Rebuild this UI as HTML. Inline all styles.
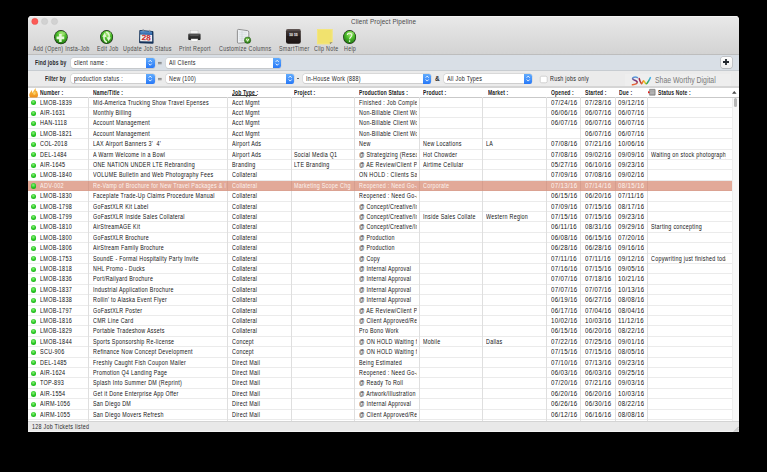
<!DOCTYPE html>
<html><head><meta charset="utf-8"><style>
*{box-sizing:border-box}
html,body{margin:0;padding:0;background:#000;width:767px;height:472px;overflow:hidden}
body{font-family:"Liberation Sans",sans-serif;color:#111}
#win{position:absolute;left:28px;top:16px;width:711px;height:416px;background:#fff;border-radius:4px 4px 0 0;overflow:hidden}
.abs{position:absolute}
svg{position:absolute;overflow:visible}
.t{position:absolute;white-space:nowrap;line-height:10px;height:10px;transform-origin:0 0}
</style></head><body><div id="win">

<div class="abs" style="left:0;top:0;width:711px;height:38.6px;background:linear-gradient(#e9e9e9,#d3d3d3);border-bottom:1px solid #bdbdbd"></div>
<div class="abs" style="left:0;top:0;width:711px;height:1px;background:#f4f4f4"></div>
<svg style="left:2.00px;top:1.00px" width="30" height="9" viewBox="0 0 30 9">
<circle cx="4.85" cy="4.4" r="3.15" fill="#fc5b57" stroke="#e5463f" stroke-width=".35"/>
<circle cx="14.6" cy="4.4" r="3.15" fill="#d2d2d2" stroke="#c3c3c3" stroke-width=".35"/>
<circle cx="24.5" cy="4.4" r="3.15" fill="#d2d2d2" stroke="#c3c3c3" stroke-width=".35"/>
</svg>
<div class="t" style="left:323.00px;top:0.54px;font-size:6.8px;color:#4a4a4a;letter-spacing:0.15px;transform:scaleX(0.93);">Client Project Pipeline</div>
<div class="t" style="left:4.60px;top:28.02px;font-size:6.3px;color:#4a4a4a;letter-spacing:0.32px;transform:scaleX(0.85);">Add (Open) Insta-Job</div>
<div class="t" style="left:68.80px;top:28.02px;font-size:6.3px;color:#4a4a4a;letter-spacing:0.32px;transform:scaleX(0.85);">Edit Job</div>
<div class="t" style="left:94.60px;top:28.02px;font-size:6.3px;color:#4a4a4a;letter-spacing:0.32px;transform:scaleX(0.85);">Update Job Status</div>
<div class="t" style="left:151.00px;top:28.02px;font-size:6.3px;color:#4a4a4a;letter-spacing:0.32px;transform:scaleX(0.85);">Print Report</div>
<div class="t" style="left:190.80px;top:28.02px;font-size:6.3px;color:#4a4a4a;letter-spacing:0.32px;transform:scaleX(0.85);">Customize Columns</div>
<div class="t" style="left:250.50px;top:28.02px;font-size:6.3px;color:#4a4a4a;letter-spacing:0.32px;transform:scaleX(0.85);">SmartTimer</div>
<div class="t" style="left:285.70px;top:28.02px;font-size:6.3px;color:#4a4a4a;letter-spacing:0.32px;transform:scaleX(0.85);">Clip Note</div>
<div class="t" style="left:316.00px;top:28.02px;font-size:6.3px;color:#4a4a4a;letter-spacing:0.32px;transform:scaleX(0.85);">Help</div>
<svg style="left:25.80px;top:13.60px" width="13.80" height="14.40" viewBox="0 0 14 14" preserveAspectRatio="none">
<defs><radialGradient id="ga" cx="55%" cy="30%" r="75%"><stop offset="0" stop-color="#a2ea6a"/><stop offset="0.45" stop-color="#4cbc2c"/><stop offset="1" stop-color="#1a6e0c"/></radialGradient></defs>
<circle cx="7" cy="7" r="6.9" fill="#1d2a18"/><circle cx="7" cy="7" r="6.3" fill="url(#ga)"/>
<ellipse cx="8.2" cy="3.2" rx="3.6" ry="1.8" fill="#c8f0a0" opacity=".35"/><path d="M4.6 4.7h2.6v2.6h2.6v2.6H7.2v2.6H4.6V9.9H2V7.3h2.6z" transform="translate(0.6,-0.9)" fill="#e6f7da"/></svg>
<svg style="left:72.40px;top:13.80px" width="13.20" height="14.20" viewBox="0 0 14 14" preserveAspectRatio="none">
<defs><radialGradient id="gb" cx="55%" cy="30%" r="75%"><stop offset="0" stop-color="#a2ea6a"/><stop offset="0.45" stop-color="#4cbc2c"/><stop offset="1" stop-color="#1a6e0c"/></radialGradient></defs>
<circle cx="7" cy="7" r="6.9" fill="#1d2a18"/><circle cx="7" cy="7" r="6.3" fill="url(#gb)"/>
<ellipse cx="8.2" cy="3.2" rx="3.6" ry="1.8" fill="#c8f0a0" opacity=".35"/><path d="M7.4 12.0 C4.6 11.2 3.6 8.2 4.6 5.8" stroke="#e4f6d6" stroke-width="1.6" fill="none"/><path d="M2.4 6.6 L5.0 2.8 L7.0 6.8 Z" fill="#e4f6d6"/><path d="M6.6 2.0 C9.4 2.8 10.4 5.8 9.4 8.2" stroke="#e4f6d6" stroke-width="1.6" fill="none"/><path d="M11.6 7.4 L9.0 11.2 L7.0 7.2 Z" fill="#e4f6d6"/></svg>
<svg style="left:315.30px;top:13.80px" width="13.20" height="14.20" viewBox="0 0 14 14" preserveAspectRatio="none">
<defs><radialGradient id="gc" cx="55%" cy="30%" r="75%"><stop offset="0" stop-color="#a2ea6a"/><stop offset="0.45" stop-color="#4cbc2c"/><stop offset="1" stop-color="#1a6e0c"/></radialGradient></defs>
<circle cx="7" cy="7" r="6.9" fill="#1d2a18"/><circle cx="7" cy="7" r="6.3" fill="url(#gc)"/>
<ellipse cx="8.2" cy="3.2" rx="3.6" ry="1.8" fill="#c8f0a0" opacity=".35"/><path d="M4.6 5.0 C4.6 2.6 9.4 2.6 9.4 5.0 C9.4 6.8 7.0 7.0 7.0 9.2" stroke="#eaf7e0" stroke-width="1.15" fill="none"/><circle cx="7.0" cy="11.0" r=".8" fill="#eaf7e0"/></svg>
<svg style="left:111.20px;top:13.00px" width="14.8" height="15" viewBox="0 0 14.8 15">
<defs><linearGradient id="cb" x1="0" y1="0" x2="0" y2="1"><stop offset="0" stop-color="#5d97d4"/><stop offset="1" stop-color="#2a5f9f"/></linearGradient></defs>
<path d="M1.2 1.0 L13.4 2.0 Q14.4 2.1 14.4 3.1 L14.6 13.8 Q14.6 14.8 13.6 14.8 L1.0 14.2 Q0.1 14.1 0.1 13.2 L0.3 1.9 Q0.3 0.9 1.2 1.0 Z" fill="#14325a"/>
<path d="M1.2 1.8 L13.0 2.8 L13.1 6.0 L1.2 5.5 Z" fill="url(#cb)"/>
<path d="M1.2 5.5 L13.1 6.0 L13.2 12.6 L1.1 12.3 Z" fill="#eef1f4"/>
<rect x="3.6" y="0.1" width="1.1" height="2.4" rx=".5" fill="#8a96a4"/><rect x="10.2" y="0.7" width="1.1" height="2.4" rx=".5" fill="#8a96a4"/>
<text x="7.2" y="12.3" font-family="Liberation Sans" font-weight="bold" font-size="8.4" fill="#cc1f26" text-anchor="middle" transform="rotate(3 7.2 9) scale(1 .92)" style="text-rendering:geometricPrecision">28</text>
</svg>
<svg style="left:159.60px;top:14.40px" width="12.8" height="12" viewBox="0 0 12.8 12">
<defs><linearGradient id="pb" x1="0" y1="0" x2="0" y2="1"><stop offset="0" stop-color="#6a6a6a"/><stop offset=".3" stop-color="#3a3a3a"/><stop offset="1" stop-color="#1e1e1e"/></linearGradient></defs>
<rect x="2.4" y="0.2" width="7.6" height="3.8" fill="#f2f2f2" stroke="#b8b8b8" stroke-width=".4"/>
<rect x="0.2" y="3.4" width="12.4" height="6.6" rx="1" fill="url(#pb)"/>
<rect x="2.2" y="5.0" width="8.4" height="1" fill="#555"/>
<rect x="3" y="8.9" width="6.9" height="2.8" fill="#fbfbfb" stroke="#999" stroke-width=".3"/>
</svg>
<svg style="left:209.00px;top:12.80px" width="14.5" height="15" viewBox="0 0 14.5 15">
<defs><radialGradient id="gd" cx="45%" cy="35%" r="70%"><stop offset="0" stop-color="#7fd050"/><stop offset="1" stop-color="#1e6a10"/></radialGradient></defs>
<path d="M1.6 0.4 L10.4 1.6 Q11.8 1.8 11.8 3.2 L11.8 12.2 Q11.8 13.4 10.4 13.5 L1.6 14.2 Q0.4 14.3 0.4 13 L0.4 1.6 Q0.4 0.3 1.6 0.4 Z" fill="#eef1f4" stroke="#7a7a7a" stroke-width=".8"/>
<path d="M2.2 3.2h7.6M2.2 5.2h7.6M2.2 7.2h7.6M2.2 9.2h7.6M2.2 11.2h7.6M5 2v11" stroke="#c2c8ce" stroke-width=".5"/>
<circle cx="10.6" cy="11.2" r="3.2" fill="url(#gd)" stroke="#174a0a" stroke-width=".4"/>
<path d="M9.4 9.9 L10.6 12.3 L11.8 9.9" stroke="#f0fae8" stroke-width="1.0" fill="none"/>
</svg>
<svg style="left:258.00px;top:13.00px" width="14.8" height="14.8" viewBox="0 0 14.8 14.8">
<defs><linearGradient id="st" x1="0" y1="0" x2="0" y2="1"><stop offset="0" stop-color="#4a403e"/><stop offset=".5" stop-color="#2b2220"/><stop offset="1" stop-color="#1a1312"/></linearGradient></defs>
<rect x="0" y="0" width="14.8" height="14.8" rx="2.2" fill="url(#st)"/>
<rect x="0.4" y="0.3" width="14" height="1.2" rx=".6" fill="#6e6462" opacity=".8"/><rect x="3.0" y="3.8" width="4.1" height="3.8" fill="#5a5250"/><rect x="7.7" y="3.8" width="4.1" height="3.8" fill="#5a5250"/><text x="5.05" y="6.9" font-family="Liberation Sans" font-weight="bold" font-size="3.3" fill="#f0f0f0" text-anchor="middle">10</text><text x="9.75" y="6.9" font-family="Liberation Sans" font-weight="bold" font-size="3.3" fill="#f0f0f0" text-anchor="middle">15</text>
<path d="M1 7.8h12.8" stroke="#120c0b" stroke-width=".5"/>
</svg>
<svg style="left:289.40px;top:13.00px" width="15.6" height="15.3" viewBox="0 0 15.6 15.3">
<path d="M0 0 H15.6 V13 L13.2 15.3 H0 Z" fill="#f1e26e"/>
<path d="M0.5 0.5 H15.1 V12.8 L13 14.8 H0.5 Z" fill="none" stroke="#f6ea8a" stroke-width=".6"/>
<path d="M13.2 15.3 L15.6 13 L12.6 13.6 Z" fill="#8a8a7a"/>
</svg>
<div class="abs" style="left:0;top:38.60px;width:711px;height:15.6px;background:#d9dfe6"></div>
<div class="abs" style="left:0;top:54.00px;width:711px;height:1px;background:#c7ccd1"></div>
<div class="abs" style="left:0;top:54.90px;width:711px;height:15.8px;background:#ebebeb"></div>
<div class="abs" style="left:0;top:70.00px;width:711px;height:2px;background:#d5d5d5"></div>
<div class="t" style="left:6.80px;top:41.65px;font-size:6.5px;color:#262626;letter-spacing:0.2px;font-weight:bold;transform:scaleX(0.77);">Find jobs by</div>
<div class="t" style="left:17.30px;top:57.75px;font-size:6.5px;color:#262626;letter-spacing:0.2px;font-weight:bold;transform:scaleX(0.77);">Filter by</div>
<div class="abs" style="left:43.00px;top:42.00px;width:83.80px;height:9.50px;background:#fff;border-radius:2.2px;box-shadow:0 0 0 .4px #c8c8c8,0 .6px .6px rgba(0,0,0,.18)"></div><div class="abs" style="left:118.40px;top:41.50px;width:8.4px;height:10.50px;background:linear-gradient(#62acfd,#2778f7);border-radius:0 2.2px 2.2px 0"></div><svg style="left:118.40px;top:42.00px" width="8.4" height="9.50" viewBox="0 0 8.4 9.50"><path d="M2.7 3.85 L4.2 2.25 L5.7 3.85 M2.7 5.65 L4.2 7.25 L5.7 5.65" stroke="#fff" stroke-width=".9" fill="none"/></svg><div class="t" style="left:46.30px;top:42.02px;font-size:6.3px;color:#1a1a1a;letter-spacing:0.32px;transform:scaleX(0.85);">client name :</div>
<div class="abs" style="left:137.50px;top:42.00px;width:115.40px;height:9.60px;background:#fff;border-radius:2.2px;box-shadow:0 0 0 .4px #c8c8c8,0 .6px .6px rgba(0,0,0,.18)"></div><div class="abs" style="left:244.50px;top:41.50px;width:8.4px;height:10.60px;background:linear-gradient(#62acfd,#2778f7);border-radius:0 2.2px 2.2px 0"></div><svg style="left:244.50px;top:42.00px" width="8.4" height="9.60" viewBox="0 0 8.4 9.60"><path d="M2.7 3.90 L4.2 2.30 L5.7 3.90 M2.7 5.70 L4.2 7.30 L5.7 5.70" stroke="#fff" stroke-width=".9" fill="none"/></svg><div class="t" style="left:140.80px;top:42.02px;font-size:6.3px;color:#1a1a1a;letter-spacing:0.32px;transform:scaleX(0.85);">All Clients</div>
<div class="abs" style="left:43.00px;top:58.10px;width:83.80px;height:9.20px;background:#fff;border-radius:2.2px;box-shadow:0 0 0 .4px #c8c8c8,0 .6px .6px rgba(0,0,0,.18)"></div><div class="abs" style="left:118.40px;top:57.60px;width:8.4px;height:10.20px;background:linear-gradient(#62acfd,#2778f7);border-radius:0 2.2px 2.2px 0"></div><svg style="left:118.40px;top:58.10px" width="8.4" height="9.20" viewBox="0 0 8.4 9.20"><path d="M2.7 3.70 L4.2 2.10 L5.7 3.70 M2.7 5.50 L4.2 7.10 L5.7 5.50" stroke="#fff" stroke-width=".9" fill="none"/></svg><div class="t" style="left:46.30px;top:58.22px;font-size:6.3px;color:#1a1a1a;letter-spacing:0.32px;transform:scaleX(0.85);">production status :</div>
<div class="abs" style="left:137.50px;top:58.10px;width:128.50px;height:9.20px;background:#fff;border-radius:2.2px;box-shadow:0 0 0 .4px #c8c8c8,0 .6px .6px rgba(0,0,0,.18)"></div><div class="abs" style="left:257.60px;top:57.60px;width:8.4px;height:10.20px;background:linear-gradient(#62acfd,#2778f7);border-radius:0 2.2px 2.2px 0"></div><svg style="left:257.60px;top:58.10px" width="8.4" height="9.20" viewBox="0 0 8.4 9.20"><path d="M2.7 3.70 L4.2 2.10 L5.7 3.70 M2.7 5.50 L4.2 7.10 L5.7 5.50" stroke="#fff" stroke-width=".9" fill="none"/></svg><div class="t" style="left:140.80px;top:58.22px;font-size:6.3px;color:#1a1a1a;letter-spacing:0.32px;transform:scaleX(0.85);">New (100)</div>
<div class="abs" style="left:274.50px;top:58.10px;width:128.40px;height:9.20px;background:#fff;border-radius:2.2px;box-shadow:0 0 0 .4px #c8c8c8,0 .6px .6px rgba(0,0,0,.18)"></div><div class="abs" style="left:394.50px;top:57.60px;width:8.4px;height:10.20px;background:linear-gradient(#62acfd,#2778f7);border-radius:0 2.2px 2.2px 0"></div><svg style="left:394.50px;top:58.10px" width="8.4" height="9.20" viewBox="0 0 8.4 9.20"><path d="M2.7 3.70 L4.2 2.10 L5.7 3.70 M2.7 5.50 L4.2 7.10 L5.7 5.50" stroke="#fff" stroke-width=".9" fill="none"/></svg><div class="t" style="left:277.80px;top:58.22px;font-size:6.3px;color:#1a1a1a;letter-spacing:0.32px;transform:scaleX(0.85);">In-House Work (888)</div>
<div class="abs" style="left:415.60px;top:58.10px;width:88.90px;height:9.20px;background:#fff;border-radius:2.2px;box-shadow:0 0 0 .4px #c8c8c8,0 .6px .6px rgba(0,0,0,.18)"></div><div class="abs" style="left:496.10px;top:57.60px;width:8.4px;height:10.20px;background:linear-gradient(#62acfd,#2778f7);border-radius:0 2.2px 2.2px 0"></div><svg style="left:496.10px;top:58.10px" width="8.4" height="9.20" viewBox="0 0 8.4 9.20"><path d="M2.7 3.70 L4.2 2.10 L5.7 3.70 M2.7 5.50 L4.2 7.10 L5.7 5.50" stroke="#fff" stroke-width=".9" fill="none"/></svg><div class="t" style="left:418.90px;top:58.22px;font-size:6.3px;color:#1a1a1a;letter-spacing:0.32px;transform:scaleX(0.85);">All Job Types</div>
<svg style="left:130.40px;top:46.20px" width="3.7" height="2.2" viewBox="0 0 3.7 2.2"><path d="M0 .45H3.7M0 1.75H3.7" stroke="#6a6a6a" stroke-width=".75"/></svg>
<svg style="left:130.40px;top:61.90px" width="3.7" height="2.2" viewBox="0 0 3.7 2.2"><path d="M0 .45H3.7M0 1.75H3.7" stroke="#6a6a6a" stroke-width=".75"/></svg>
<div class="abs" style="left:268.90px;top:62.40px;width:2.4px;height:1px;background:#666"></div>
<div class="t" style="left:407.00px;top:57.81px;font-size:7.2px;color:#2a2a2a;font-weight:bold;transform:scaleX(0.9);">&amp;</div>
<svg style="left:512.30px;top:59.60px" width="7.4" height="7" viewBox="0 0 7.4 7"><rect x=".25" y=".25" width="6.9" height="6.5" rx="1.4" fill="#fff" stroke="#b0b0b0" stroke-width=".5"/></svg>
<div class="t" style="left:521.90px;top:58.42px;font-size:6.3px;color:#1e1e1e;letter-spacing:0.32px;transform:scaleX(0.85);">Rush jobs only</div>
<div class="abs" style="left:596.70px;top:58.40px;width:106px;height:11.6px;background:#eeeeee"></div>
<svg style="left:603.00px;top:59.50px" width="21" height="10" viewBox="0 0 21 10">
<defs>
<linearGradient id="ls" x1="0" y1="0" x2="0" y2="1"><stop offset="0" stop-color="#5aa0e0"/><stop offset=".5" stop-color="#7a2a70"/><stop offset="1" stop-color="#f26a30"/></linearGradient>
<linearGradient id="lw" x1="0" y1="0" x2="1" y2="0"><stop offset="0" stop-color="#9a1c48"/><stop offset=".3" stop-color="#f07a2a"/><stop offset=".5" stop-color="#f0d020"/><stop offset=".7" stop-color="#2aa040"/><stop offset="1" stop-color="#40b0f0"/></linearGradient>
</defs>
<path d="M6.5 1.6 C4.5 0.4 1.2 1.2 1.6 2.8 C2 4.3 6.8 4.6 6.2 6.6 C5.8 8.2 2.6 8.6 1.4 8.8" stroke="url(#ls)" stroke-width="1.5" fill="none" stroke-linecap="round"/>
<path d="M8.2 2.6 C9 4.5 9.6 7.2 10.6 7.8 C11.4 7.6 11.8 5 12.8 4.8 C13.6 5.2 14 8 15.2 7.8 C16.8 7.2 18.4 3.6 19.4 1.6" stroke="url(#lw)" stroke-width="1.5" fill="none" stroke-linecap="round"/>
</svg>
<div class="t" style="left:627.30px;top:59.05px;font-size:8.5px;color:#7a7a7a;transform:scaleX(0.81);">Shae Worthy Digital</div>
<div class="abs" style="left:692.60px;top:40.80px;width:11px;height:10.8px;background:linear-gradient(#fdfdfd,#efefef);border-radius:2px;box-shadow:0 0 0 .5px #a9a9a9,0 .5px .6px rgba(0,0,0,.2)"></div>
<svg style="left:695.00px;top:43.30px" width="6" height="6" viewBox="0 0 6 6"><path d="M0 3H6M3 0V6" stroke="#23282e" stroke-width="1.8"/></svg>
<div class="abs" style="left:0;top:72.00px;width:711px;height:9.30px;background:#fff"></div>
<div class="abs" style="left:0;top:80.60px;width:711px;height:1px;background:#c9c9c9"></div>
<div class="t" style="left:12.30px;top:72.15px;font-size:6.5px;color:#1a1a1a;letter-spacing:0.2px;font-weight:bold;transform:scaleX(0.77);">Number :</div>
<div class="t" style="left:65.20px;top:72.15px;font-size:6.5px;color:#1a1a1a;letter-spacing:0.2px;font-weight:bold;transform:scaleX(0.77);">Name/Title :</div>
<div class="t" style="left:203.70px;top:72.15px;font-size:6.5px;color:#1a1a1a;letter-spacing:0.2px;font-weight:bold;transform:scaleX(0.77);">Job Type :</div>
<div class="t" style="left:266.20px;top:72.15px;font-size:6.5px;color:#1a1a1a;letter-spacing:0.2px;font-weight:bold;transform:scaleX(0.77);">Project :</div>
<div class="t" style="left:330.60px;top:72.15px;font-size:6.5px;color:#1a1a1a;letter-spacing:0.2px;font-weight:bold;transform:scaleX(0.77);">Production Status :</div>
<div class="t" style="left:395.00px;top:72.15px;font-size:6.5px;color:#1a1a1a;letter-spacing:0.2px;font-weight:bold;transform:scaleX(0.77);">Product :</div>
<div class="t" style="left:459.50px;top:72.15px;font-size:6.5px;color:#1a1a1a;letter-spacing:0.2px;font-weight:bold;transform:scaleX(0.77);">Market :</div>
<div class="t" style="left:522.70px;top:72.15px;font-size:6.5px;color:#1a1a1a;letter-spacing:0.2px;font-weight:bold;transform:scaleX(0.77);">Opened :</div>
<div class="t" style="left:556.50px;top:72.15px;font-size:6.5px;color:#1a1a1a;letter-spacing:0.2px;font-weight:bold;transform:scaleX(0.77);">Started :</div>
<div class="t" style="left:591.00px;top:72.15px;font-size:6.5px;color:#1a1a1a;letter-spacing:0.2px;font-weight:bold;transform:scaleX(0.77);">Due :</div>
<div class="t" style="left:630.10px;top:72.15px;font-size:6.5px;color:#1a1a1a;letter-spacing:0.2px;font-weight:bold;transform:scaleX(0.77);">Status Note :</div>
<div class="abs" style="left:203.80px;top:79.00px;width:25.6px;height:.7px;background:#444"></div>
<svg style="left:0.90px;top:71.60px" width="9.2" height="9.8" viewBox="0 0 9.2 9.8">
<defs><linearGradient id="fl" x1="0" y1="0" x2="0" y2="1"><stop offset="0" stop-color="#f7c04a"/><stop offset=".6" stop-color="#f4a630"/><stop offset="1" stop-color="#ec8e1a"/></linearGradient></defs>
<path d="M1.2 9.4 C0 8.2 -0.1 6.2 1.2 4.6 C1.7 3.8 2.2 2.9 2.4 1.9 C3.0 2.9 3.4 4.0 3.3 5.3 C3.8 4.3 4.4 3.4 5.0 2.6 C5.6 1.8 6.0 1.0 6.3 0.1 C6.8 1.0 7.1 2.0 6.9 3.1 C7.3 2.9 7.6 2.7 7.9 2.4 C8.2 3.8 8.9 4.9 9.0 6.5 C9.1 7.8 8.8 8.8 8.1 9.4 Z" fill="url(#fl)"/>
<ellipse cx="5.4" cy="5.2" rx="1.2" ry="1.8" fill="#fce27a" opacity=".7"/>
</svg>
<svg style="left:620.20px;top:73.20px" width="7.4" height="6.6" viewBox="0 0 7.4 6.6">
<rect x="1.4" y="0.3" width="5.8" height="6" rx=".4" fill="#9a9a9a" stroke="#555" stroke-width=".4"/>
<path d="M2.2 1.9h4.2M2.2 3.3h4.2M2.2 4.7h4.2" stroke="#d8d8d8" stroke-width=".5"/>
<path d="M0 2.0 L2.2 3.3 L0 4.6 Z" fill="#e21d18"/>
</svg>
<svg style="left:704.40px;top:75.00px" width="4.6" height="2.8" viewBox="0 0 4.6 2.8"><path d="M0 2.8 L2.3 0 L4.6 2.8 Z" fill="#4a4a4a"/></svg>
<div class="abs" style="left:0;top:91.00px;width:703.80px;height:1px;background:#ebebeb"></div>
<div class="abs" style="left:2.90px;top:84.20px;width:5.2px;height:5.2px;border-radius:50%;background:radial-gradient(circle at 45% 35%,#8af27a,#22c41c 55%,#109a10)"></div>
<div class="t" style="left:11.50px;top:81.62px;font-size:6.3px;color:#121212;letter-spacing:0.32px;transform:scaleX(0.87);width:53.56px;overflow:hidden;">LMOB-1839</div>
<div class="t" style="left:64.90px;top:81.62px;font-size:6.3px;color:#121212;letter-spacing:0.32px;transform:scaleX(0.85);width:155.65px;overflow:hidden;">Mid-America Trucking Show Travel Epenses</div>
<div class="t" style="left:203.70px;top:81.62px;font-size:6.3px;color:#121212;letter-spacing:0.32px;transform:scaleX(0.85);width:67.06px;overflow:hidden;">Acct Mgmt</div>
<div class="t" style="left:330.60px;top:81.62px;font-size:6.3px;color:#121212;letter-spacing:0.32px;transform:scaleX(0.85);width:68.24px;overflow:hidden;">Finished : Job Complete</div>
<div class="t" style="left:522.70px;top:81.62px;font-size:6.3px;color:#121212;letter-spacing:0.32px;transform:scaleX(0.975);width:28.41px;overflow:hidden;">07/24/16</div>
<div class="t" style="left:556.50px;top:81.62px;font-size:6.3px;color:#121212;letter-spacing:0.32px;transform:scaleX(0.975);width:29.23px;overflow:hidden;">07/28/16</div>
<div class="t" style="left:590.40px;top:81.62px;font-size:6.3px;color:#121212;letter-spacing:0.32px;transform:scaleX(0.975);width:27.38px;overflow:hidden;">09/12/16</div>
<div class="abs" style="left:0;top:101.40px;width:703.80px;height:1px;background:#ebebeb"></div>
<div class="abs" style="left:2.90px;top:94.60px;width:5.2px;height:5.2px;border-radius:50%;background:radial-gradient(circle at 45% 35%,#8af27a,#22c41c 55%,#109a10)"></div>
<div class="t" style="left:11.50px;top:92.02px;font-size:6.3px;color:#121212;letter-spacing:0.32px;transform:scaleX(0.87);width:53.56px;overflow:hidden;">AIR-1631</div>
<div class="t" style="left:64.90px;top:92.02px;font-size:6.3px;color:#121212;letter-spacing:0.32px;transform:scaleX(0.85);width:155.65px;overflow:hidden;">Monthly Billing</div>
<div class="t" style="left:203.70px;top:92.02px;font-size:6.3px;color:#121212;letter-spacing:0.32px;transform:scaleX(0.85);width:67.06px;overflow:hidden;">Acct Mgmt</div>
<div class="t" style="left:330.60px;top:92.02px;font-size:6.3px;color:#121212;letter-spacing:0.32px;transform:scaleX(0.85);width:68.24px;overflow:hidden;">Non-Billable Client Work</div>
<div class="t" style="left:522.70px;top:92.02px;font-size:6.3px;color:#121212;letter-spacing:0.32px;transform:scaleX(0.975);width:28.41px;overflow:hidden;">06/06/16</div>
<div class="t" style="left:556.50px;top:92.02px;font-size:6.3px;color:#121212;letter-spacing:0.32px;transform:scaleX(0.975);width:29.23px;overflow:hidden;">06/07/16</div>
<div class="t" style="left:590.40px;top:92.02px;font-size:6.3px;color:#121212;letter-spacing:0.32px;transform:scaleX(0.975);width:27.38px;overflow:hidden;">06/07/16</div>
<div class="abs" style="left:0;top:111.80px;width:703.80px;height:1px;background:#ebebeb"></div>
<div class="abs" style="left:2.90px;top:105.00px;width:5.2px;height:5.2px;border-radius:50%;background:radial-gradient(circle at 45% 35%,#8af27a,#22c41c 55%,#109a10)"></div>
<div class="t" style="left:11.50px;top:102.42px;font-size:6.3px;color:#121212;letter-spacing:0.32px;transform:scaleX(0.87);width:53.56px;overflow:hidden;">HAN-1118</div>
<div class="t" style="left:64.90px;top:102.42px;font-size:6.3px;color:#121212;letter-spacing:0.32px;transform:scaleX(0.85);width:155.65px;overflow:hidden;">Account Management</div>
<div class="t" style="left:203.70px;top:102.42px;font-size:6.3px;color:#121212;letter-spacing:0.32px;transform:scaleX(0.85);width:67.06px;overflow:hidden;">Acct Mgmt</div>
<div class="t" style="left:330.60px;top:102.42px;font-size:6.3px;color:#121212;letter-spacing:0.32px;transform:scaleX(0.85);width:68.24px;overflow:hidden;">Non-Billable Client Work</div>
<div class="t" style="left:522.70px;top:102.42px;font-size:6.3px;color:#121212;letter-spacing:0.32px;transform:scaleX(0.975);width:28.41px;overflow:hidden;">06/07/16</div>
<div class="t" style="left:556.50px;top:102.42px;font-size:6.3px;color:#121212;letter-spacing:0.32px;transform:scaleX(0.975);width:29.23px;overflow:hidden;">06/07/16</div>
<div class="t" style="left:590.40px;top:102.42px;font-size:6.3px;color:#121212;letter-spacing:0.32px;transform:scaleX(0.975);width:27.38px;overflow:hidden;">06/07/16</div>
<div class="abs" style="left:0;top:122.20px;width:703.80px;height:1px;background:#ebebeb"></div>
<div class="abs" style="left:2.90px;top:115.40px;width:5.2px;height:5.2px;border-radius:50%;background:radial-gradient(circle at 45% 35%,#8af27a,#22c41c 55%,#109a10)"></div>
<div class="t" style="left:11.50px;top:112.82px;font-size:6.3px;color:#121212;letter-spacing:0.32px;transform:scaleX(0.87);width:53.56px;overflow:hidden;">LMOB-1821</div>
<div class="t" style="left:64.90px;top:112.82px;font-size:6.3px;color:#121212;letter-spacing:0.32px;transform:scaleX(0.85);width:155.65px;overflow:hidden;">Account Management</div>
<div class="t" style="left:203.70px;top:112.82px;font-size:6.3px;color:#121212;letter-spacing:0.32px;transform:scaleX(0.85);width:67.06px;overflow:hidden;">Acct Mgmt</div>
<div class="t" style="left:330.60px;top:112.82px;font-size:6.3px;color:#121212;letter-spacing:0.32px;transform:scaleX(0.85);width:68.24px;overflow:hidden;">Non-Billable Client Work</div>
<div class="t" style="left:556.50px;top:112.82px;font-size:6.3px;color:#121212;letter-spacing:0.32px;transform:scaleX(0.975);width:29.23px;overflow:hidden;">06/07/16</div>
<div class="t" style="left:590.40px;top:112.82px;font-size:6.3px;color:#121212;letter-spacing:0.32px;transform:scaleX(0.975);width:27.38px;overflow:hidden;">06/07/16</div>
<div class="abs" style="left:0;top:132.60px;width:703.80px;height:1px;background:#ebebeb"></div>
<div class="abs" style="left:2.90px;top:125.80px;width:5.2px;height:5.2px;border-radius:50%;background:radial-gradient(circle at 45% 35%,#8af27a,#22c41c 55%,#109a10)"></div>
<div class="t" style="left:11.50px;top:123.22px;font-size:6.3px;color:#121212;letter-spacing:0.32px;transform:scaleX(0.87);width:53.56px;overflow:hidden;">COL-2018</div>
<div class="t" style="left:64.90px;top:123.22px;font-size:6.3px;color:#121212;letter-spacing:0.32px;transform:scaleX(0.85);width:155.65px;overflow:hidden;">LAX Airport Banners 3'&nbsp; 4'</div>
<div class="t" style="left:203.70px;top:123.22px;font-size:6.3px;color:#121212;letter-spacing:0.32px;transform:scaleX(0.85);width:67.06px;overflow:hidden;">Airport Ads</div>
<div class="t" style="left:330.60px;top:123.22px;font-size:6.3px;color:#121212;letter-spacing:0.32px;transform:scaleX(0.85);width:68.24px;overflow:hidden;">New</div>
<div class="t" style="left:395.00px;top:123.22px;font-size:6.3px;color:#121212;letter-spacing:0.32px;transform:scaleX(0.85);width:67.41px;overflow:hidden;">New Locations</div>
<div class="t" style="left:458.30px;top:123.22px;font-size:6.3px;color:#121212;letter-spacing:0.32px;transform:scaleX(0.85);width:68.47px;overflow:hidden;">LA</div>
<div class="t" style="left:522.70px;top:123.22px;font-size:6.3px;color:#121212;letter-spacing:0.32px;transform:scaleX(0.975);width:28.41px;overflow:hidden;">07/08/16</div>
<div class="t" style="left:556.50px;top:123.22px;font-size:6.3px;color:#121212;letter-spacing:0.32px;transform:scaleX(0.975);width:29.23px;overflow:hidden;">07/21/16</div>
<div class="t" style="left:590.40px;top:123.22px;font-size:6.3px;color:#121212;letter-spacing:0.32px;transform:scaleX(0.975);width:27.38px;overflow:hidden;">10/06/16</div>
<div class="abs" style="left:0;top:143.00px;width:703.80px;height:1px;background:#ebebeb"></div>
<div class="abs" style="left:2.90px;top:136.20px;width:5.2px;height:5.2px;border-radius:50%;background:radial-gradient(circle at 45% 35%,#8af27a,#22c41c 55%,#109a10)"></div>
<div class="t" style="left:11.50px;top:133.62px;font-size:6.3px;color:#121212;letter-spacing:0.32px;transform:scaleX(0.87);width:53.56px;overflow:hidden;">DEL-1484</div>
<div class="t" style="left:64.90px;top:133.62px;font-size:6.3px;color:#121212;letter-spacing:0.32px;transform:scaleX(0.85);width:155.65px;overflow:hidden;">A Warm Welcome in a Bowl</div>
<div class="t" style="left:203.70px;top:133.62px;font-size:6.3px;color:#121212;letter-spacing:0.32px;transform:scaleX(0.85);width:67.06px;overflow:hidden;">Airport Ads</div>
<div class="t" style="left:266.20px;top:133.62px;font-size:6.3px;color:#121212;letter-spacing:0.32px;transform:scaleX(0.85);width:68.24px;overflow:hidden;">Social Media Q1</div>
<div class="t" style="left:330.60px;top:133.62px;font-size:6.3px;color:#121212;letter-spacing:0.32px;transform:scaleX(0.85);width:68.24px;overflow:hidden;">@ Strategizing (Research)</div>
<div class="t" style="left:395.00px;top:133.62px;font-size:6.3px;color:#121212;letter-spacing:0.32px;transform:scaleX(0.85);width:67.41px;overflow:hidden;">Hot Chowder</div>
<div class="t" style="left:522.70px;top:133.62px;font-size:6.3px;color:#121212;letter-spacing:0.32px;transform:scaleX(0.975);width:28.41px;overflow:hidden;">07/08/16</div>
<div class="t" style="left:556.50px;top:133.62px;font-size:6.3px;color:#121212;letter-spacing:0.32px;transform:scaleX(0.975);width:29.23px;overflow:hidden;">09/02/16</div>
<div class="t" style="left:590.40px;top:133.62px;font-size:6.3px;color:#121212;letter-spacing:0.32px;transform:scaleX(0.975);width:27.38px;overflow:hidden;">09/09/16</div>
<div class="t" style="left:623.10px;top:133.62px;font-size:6.3px;color:#121212;letter-spacing:0.32px;transform:scaleX(0.85);width:87.88px;overflow:hidden;">Waiting on stock photography</div>
<div class="abs" style="left:0;top:153.40px;width:703.80px;height:1px;background:#ebebeb"></div>
<div class="abs" style="left:2.90px;top:146.60px;width:5.2px;height:5.2px;border-radius:50%;background:radial-gradient(circle at 45% 35%,#8af27a,#22c41c 55%,#109a10)"></div>
<div class="t" style="left:11.50px;top:144.02px;font-size:6.3px;color:#121212;letter-spacing:0.32px;transform:scaleX(0.87);width:53.56px;overflow:hidden;">AIR-1645</div>
<div class="t" style="left:64.90px;top:144.02px;font-size:6.3px;color:#121212;letter-spacing:0.32px;transform:scaleX(0.85);width:155.65px;overflow:hidden;">ONE NATION UNDER LTE Rebranding</div>
<div class="t" style="left:203.70px;top:144.02px;font-size:6.3px;color:#121212;letter-spacing:0.32px;transform:scaleX(0.85);width:67.06px;overflow:hidden;">Branding</div>
<div class="t" style="left:266.20px;top:144.02px;font-size:6.3px;color:#121212;letter-spacing:0.32px;transform:scaleX(0.85);width:68.24px;overflow:hidden;">LTE Branding</div>
<div class="t" style="left:330.60px;top:144.02px;font-size:6.3px;color:#121212;letter-spacing:0.32px;transform:scaleX(0.85);width:68.24px;overflow:hidden;">@ AE Review/Client Proof</div>
<div class="t" style="left:395.00px;top:144.02px;font-size:6.3px;color:#121212;letter-spacing:0.32px;transform:scaleX(0.85);width:67.41px;overflow:hidden;">Airtime Cellular</div>
<div class="t" style="left:522.70px;top:144.02px;font-size:6.3px;color:#121212;letter-spacing:0.32px;transform:scaleX(0.975);width:28.41px;overflow:hidden;">05/27/16</div>
<div class="t" style="left:556.50px;top:144.02px;font-size:6.3px;color:#121212;letter-spacing:0.32px;transform:scaleX(0.975);width:29.23px;overflow:hidden;">06/10/16</div>
<div class="t" style="left:590.40px;top:144.02px;font-size:6.3px;color:#121212;letter-spacing:0.32px;transform:scaleX(0.975);width:27.38px;overflow:hidden;">09/23/16</div>
<div class="abs" style="left:0;top:163.80px;width:703.80px;height:1px;background:#ebebeb"></div>
<div class="abs" style="left:2.90px;top:157.00px;width:5.2px;height:5.2px;border-radius:50%;background:radial-gradient(circle at 45% 35%,#8af27a,#22c41c 55%,#109a10)"></div>
<div class="t" style="left:11.50px;top:154.42px;font-size:6.3px;color:#121212;letter-spacing:0.32px;transform:scaleX(0.87);width:53.56px;overflow:hidden;">LMOB-1840</div>
<div class="t" style="left:64.90px;top:154.42px;font-size:6.3px;color:#121212;letter-spacing:0.32px;transform:scaleX(0.85);width:155.65px;overflow:hidden;">VOLUME Bulletin and Web Photography Fees</div>
<div class="t" style="left:203.70px;top:154.42px;font-size:6.3px;color:#121212;letter-spacing:0.32px;transform:scaleX(0.85);width:67.06px;overflow:hidden;">Collateral</div>
<div class="t" style="left:330.60px;top:154.42px;font-size:6.3px;color:#121212;letter-spacing:0.32px;transform:scaleX(0.85);width:68.24px;overflow:hidden;">ON HOLD : Clients Say</div>
<div class="t" style="left:522.70px;top:154.42px;font-size:6.3px;color:#121212;letter-spacing:0.32px;transform:scaleX(0.975);width:28.41px;overflow:hidden;">07/09/16</div>
<div class="t" style="left:556.50px;top:154.42px;font-size:6.3px;color:#121212;letter-spacing:0.32px;transform:scaleX(0.975);width:29.23px;overflow:hidden;">07/08/16</div>
<div class="t" style="left:590.40px;top:154.42px;font-size:6.3px;color:#121212;letter-spacing:0.32px;transform:scaleX(0.975);width:27.38px;overflow:hidden;">09/02/16</div>
<div class="abs" style="left:0;top:164.80px;width:703.80px;height:10.40px;background:#e2a998"></div>
<div class="abs" style="left:0;top:174.20px;width:703.80px;height:1px;background:#dba292"></div>
<div class="abs" style="left:2.90px;top:167.40px;width:5.2px;height:5.2px;border-radius:50%;background:radial-gradient(circle at 45% 35%,#8af27a,#22c41c 55%,#109a10)"></div>
<div class="t" style="left:11.50px;top:164.82px;font-size:6.3px;color:#fdf3ef;letter-spacing:0.32px;transform:scaleX(0.87);width:53.56px;overflow:hidden;">ADV-002</div>
<div class="t" style="left:64.90px;top:164.82px;font-size:6.3px;color:#fdf3ef;letter-spacing:0.32px;transform:scaleX(0.85);width:155.65px;overflow:hidden;">Re-Vamp of Brochure for New Travel Packages &amp; Itineraries</div>
<div class="t" style="left:203.70px;top:164.82px;font-size:6.3px;color:#fdf3ef;letter-spacing:0.32px;transform:scaleX(0.85);width:67.06px;overflow:hidden;">Collateral</div>
<div class="t" style="left:266.20px;top:164.82px;font-size:6.3px;color:#fdf3ef;letter-spacing:0.32px;transform:scaleX(0.85);width:68.24px;overflow:hidden;">Marketing Scope Chg</div>
<div class="t" style="left:330.60px;top:164.82px;font-size:6.3px;color:#fdf3ef;letter-spacing:0.32px;transform:scaleX(0.85);width:68.24px;overflow:hidden;">Reopened : Need Go-Ahead</div>
<div class="t" style="left:395.00px;top:164.82px;font-size:6.3px;color:#fdf3ef;letter-spacing:0.32px;transform:scaleX(0.85);width:67.41px;overflow:hidden;">Corporate</div>
<div class="t" style="left:522.70px;top:164.82px;font-size:6.3px;color:#fdf3ef;letter-spacing:0.32px;transform:scaleX(0.975);width:28.41px;overflow:hidden;">07/13/16</div>
<div class="t" style="left:556.50px;top:164.82px;font-size:6.3px;color:#fdf3ef;letter-spacing:0.32px;transform:scaleX(0.975);width:29.23px;overflow:hidden;">07/14/16</div>
<div class="t" style="left:590.40px;top:164.82px;font-size:6.3px;color:#fdf3ef;letter-spacing:0.32px;transform:scaleX(0.975);width:27.38px;overflow:hidden;">08/15/16</div>
<div class="abs" style="left:0;top:184.60px;width:703.80px;height:1px;background:#ebebeb"></div>
<div class="abs" style="left:2.90px;top:177.80px;width:5.2px;height:5.2px;border-radius:50%;background:radial-gradient(circle at 45% 35%,#8af27a,#22c41c 55%,#109a10)"></div>
<div class="t" style="left:11.50px;top:175.22px;font-size:6.3px;color:#121212;letter-spacing:0.32px;transform:scaleX(0.87);width:53.56px;overflow:hidden;">LMOB-1830</div>
<div class="t" style="left:64.90px;top:175.22px;font-size:6.3px;color:#121212;letter-spacing:0.32px;transform:scaleX(0.85);width:155.65px;overflow:hidden;">Faceplate Trade-Up Claims Procedure Manual</div>
<div class="t" style="left:203.70px;top:175.22px;font-size:6.3px;color:#121212;letter-spacing:0.32px;transform:scaleX(0.85);width:67.06px;overflow:hidden;">Collateral</div>
<div class="t" style="left:330.60px;top:175.22px;font-size:6.3px;color:#121212;letter-spacing:0.32px;transform:scaleX(0.85);width:68.24px;overflow:hidden;">Reopened : Need Go-Ahead</div>
<div class="t" style="left:522.70px;top:175.22px;font-size:6.3px;color:#121212;letter-spacing:0.32px;transform:scaleX(0.975);width:28.41px;overflow:hidden;">06/15/16</div>
<div class="t" style="left:556.50px;top:175.22px;font-size:6.3px;color:#121212;letter-spacing:0.32px;transform:scaleX(0.975);width:29.23px;overflow:hidden;">06/20/16</div>
<div class="t" style="left:590.40px;top:175.22px;font-size:6.3px;color:#121212;letter-spacing:0.32px;transform:scaleX(0.975);width:27.38px;overflow:hidden;">07/11/16</div>
<div class="abs" style="left:0;top:195.00px;width:703.80px;height:1px;background:#ebebeb"></div>
<div class="abs" style="left:2.90px;top:188.20px;width:5.2px;height:5.2px;border-radius:50%;background:radial-gradient(circle at 45% 35%,#8af27a,#22c41c 55%,#109a10)"></div>
<div class="t" style="left:11.50px;top:185.62px;font-size:6.3px;color:#121212;letter-spacing:0.32px;transform:scaleX(0.87);width:53.56px;overflow:hidden;">LMOB-1798</div>
<div class="t" style="left:64.90px;top:185.62px;font-size:6.3px;color:#121212;letter-spacing:0.32px;transform:scaleX(0.85);width:155.65px;overflow:hidden;">GoFastXLR Kit Label</div>
<div class="t" style="left:203.70px;top:185.62px;font-size:6.3px;color:#121212;letter-spacing:0.32px;transform:scaleX(0.85);width:67.06px;overflow:hidden;">Collateral</div>
<div class="t" style="left:330.60px;top:185.62px;font-size:6.3px;color:#121212;letter-spacing:0.32px;transform:scaleX(0.85);width:68.24px;overflow:hidden;">@ Concept/Creative/Initial</div>
<div class="t" style="left:522.70px;top:185.62px;font-size:6.3px;color:#121212;letter-spacing:0.32px;transform:scaleX(0.975);width:28.41px;overflow:hidden;">07/09/16</div>
<div class="t" style="left:556.50px;top:185.62px;font-size:6.3px;color:#121212;letter-spacing:0.32px;transform:scaleX(0.975);width:29.23px;overflow:hidden;">07/15/16</div>
<div class="t" style="left:590.40px;top:185.62px;font-size:6.3px;color:#121212;letter-spacing:0.32px;transform:scaleX(0.975);width:27.38px;overflow:hidden;">08/17/16</div>
<div class="abs" style="left:0;top:205.40px;width:703.80px;height:1px;background:#ebebeb"></div>
<div class="abs" style="left:2.90px;top:198.60px;width:5.2px;height:5.2px;border-radius:50%;background:radial-gradient(circle at 45% 35%,#8af27a,#22c41c 55%,#109a10)"></div>
<div class="t" style="left:11.50px;top:196.02px;font-size:6.3px;color:#121212;letter-spacing:0.32px;transform:scaleX(0.87);width:53.56px;overflow:hidden;">LMOB-1799</div>
<div class="t" style="left:64.90px;top:196.02px;font-size:6.3px;color:#121212;letter-spacing:0.32px;transform:scaleX(0.85);width:155.65px;overflow:hidden;">GoFastXLR Inside Sales Collateral</div>
<div class="t" style="left:203.70px;top:196.02px;font-size:6.3px;color:#121212;letter-spacing:0.32px;transform:scaleX(0.85);width:67.06px;overflow:hidden;">Collateral</div>
<div class="t" style="left:330.60px;top:196.02px;font-size:6.3px;color:#121212;letter-spacing:0.32px;transform:scaleX(0.85);width:68.24px;overflow:hidden;">@ Concept/Creative/Initial</div>
<div class="t" style="left:395.00px;top:196.02px;font-size:6.3px;color:#121212;letter-spacing:0.32px;transform:scaleX(0.85);width:67.41px;overflow:hidden;">Inside Sales Collate</div>
<div class="t" style="left:458.30px;top:196.02px;font-size:6.3px;color:#121212;letter-spacing:0.32px;transform:scaleX(0.85);width:68.47px;overflow:hidden;">Western Region</div>
<div class="t" style="left:522.70px;top:196.02px;font-size:6.3px;color:#121212;letter-spacing:0.32px;transform:scaleX(0.975);width:28.41px;overflow:hidden;">07/15/16</div>
<div class="t" style="left:556.50px;top:196.02px;font-size:6.3px;color:#121212;letter-spacing:0.32px;transform:scaleX(0.975);width:29.23px;overflow:hidden;">07/15/16</div>
<div class="t" style="left:590.40px;top:196.02px;font-size:6.3px;color:#121212;letter-spacing:0.32px;transform:scaleX(0.975);width:27.38px;overflow:hidden;">09/23/16</div>
<div class="abs" style="left:0;top:215.80px;width:703.80px;height:1px;background:#ebebeb"></div>
<div class="abs" style="left:2.90px;top:209.00px;width:5.2px;height:5.2px;border-radius:50%;background:radial-gradient(circle at 45% 35%,#8af27a,#22c41c 55%,#109a10)"></div>
<div class="t" style="left:11.50px;top:206.42px;font-size:6.3px;color:#121212;letter-spacing:0.32px;transform:scaleX(0.87);width:53.56px;overflow:hidden;">LMOB-1810</div>
<div class="t" style="left:64.90px;top:206.42px;font-size:6.3px;color:#121212;letter-spacing:0.32px;transform:scaleX(0.85);width:155.65px;overflow:hidden;">AirStreamAGE Kit</div>
<div class="t" style="left:203.70px;top:206.42px;font-size:6.3px;color:#121212;letter-spacing:0.32px;transform:scaleX(0.85);width:67.06px;overflow:hidden;">Collateral</div>
<div class="t" style="left:330.60px;top:206.42px;font-size:6.3px;color:#121212;letter-spacing:0.32px;transform:scaleX(0.85);width:68.24px;overflow:hidden;">@ Concept/Creative/Initial</div>
<div class="t" style="left:522.70px;top:206.42px;font-size:6.3px;color:#121212;letter-spacing:0.32px;transform:scaleX(0.975);width:28.41px;overflow:hidden;">06/11/16</div>
<div class="t" style="left:556.50px;top:206.42px;font-size:6.3px;color:#121212;letter-spacing:0.32px;transform:scaleX(0.975);width:29.23px;overflow:hidden;">08/31/16</div>
<div class="t" style="left:590.40px;top:206.42px;font-size:6.3px;color:#121212;letter-spacing:0.32px;transform:scaleX(0.975);width:27.38px;overflow:hidden;">09/29/16</div>
<div class="t" style="left:623.10px;top:206.42px;font-size:6.3px;color:#121212;letter-spacing:0.32px;transform:scaleX(0.85);width:87.88px;overflow:hidden;">Starting concepting</div>
<div class="abs" style="left:0;top:226.20px;width:703.80px;height:1px;background:#ebebeb"></div>
<div class="abs" style="left:2.90px;top:219.40px;width:5.2px;height:5.2px;border-radius:50%;background:radial-gradient(circle at 45% 35%,#8af27a,#22c41c 55%,#109a10)"></div>
<div class="t" style="left:11.50px;top:216.82px;font-size:6.3px;color:#121212;letter-spacing:0.32px;transform:scaleX(0.87);width:53.56px;overflow:hidden;">LMOB-1800</div>
<div class="t" style="left:64.90px;top:216.82px;font-size:6.3px;color:#121212;letter-spacing:0.32px;transform:scaleX(0.85);width:155.65px;overflow:hidden;">GoFastXLR Brochure</div>
<div class="t" style="left:203.70px;top:216.82px;font-size:6.3px;color:#121212;letter-spacing:0.32px;transform:scaleX(0.85);width:67.06px;overflow:hidden;">Collateral</div>
<div class="t" style="left:330.60px;top:216.82px;font-size:6.3px;color:#121212;letter-spacing:0.32px;transform:scaleX(0.85);width:68.24px;overflow:hidden;">@ Production</div>
<div class="t" style="left:522.70px;top:216.82px;font-size:6.3px;color:#121212;letter-spacing:0.32px;transform:scaleX(0.975);width:28.41px;overflow:hidden;">06/08/16</div>
<div class="t" style="left:556.50px;top:216.82px;font-size:6.3px;color:#121212;letter-spacing:0.32px;transform:scaleX(0.975);width:29.23px;overflow:hidden;">06/15/16</div>
<div class="t" style="left:590.40px;top:216.82px;font-size:6.3px;color:#121212;letter-spacing:0.32px;transform:scaleX(0.975);width:27.38px;overflow:hidden;">07/20/16</div>
<div class="abs" style="left:0;top:236.60px;width:703.80px;height:1px;background:#ebebeb"></div>
<div class="abs" style="left:2.90px;top:229.80px;width:5.2px;height:5.2px;border-radius:50%;background:radial-gradient(circle at 45% 35%,#8af27a,#22c41c 55%,#109a10)"></div>
<div class="t" style="left:11.50px;top:227.22px;font-size:6.3px;color:#121212;letter-spacing:0.32px;transform:scaleX(0.87);width:53.56px;overflow:hidden;">LMOB-1806</div>
<div class="t" style="left:64.90px;top:227.22px;font-size:6.3px;color:#121212;letter-spacing:0.32px;transform:scaleX(0.85);width:155.65px;overflow:hidden;">AirStream Family Brochure</div>
<div class="t" style="left:203.70px;top:227.22px;font-size:6.3px;color:#121212;letter-spacing:0.32px;transform:scaleX(0.85);width:67.06px;overflow:hidden;">Collateral</div>
<div class="t" style="left:330.60px;top:227.22px;font-size:6.3px;color:#121212;letter-spacing:0.32px;transform:scaleX(0.85);width:68.24px;overflow:hidden;">@ Production</div>
<div class="t" style="left:522.70px;top:227.22px;font-size:6.3px;color:#121212;letter-spacing:0.32px;transform:scaleX(0.975);width:28.41px;overflow:hidden;">06/28/16</div>
<div class="t" style="left:556.50px;top:227.22px;font-size:6.3px;color:#121212;letter-spacing:0.32px;transform:scaleX(0.975);width:29.23px;overflow:hidden;">06/28/16</div>
<div class="t" style="left:590.40px;top:227.22px;font-size:6.3px;color:#121212;letter-spacing:0.32px;transform:scaleX(0.975);width:27.38px;overflow:hidden;">09/16/16</div>
<div class="abs" style="left:0;top:247.00px;width:703.80px;height:1px;background:#ebebeb"></div>
<div class="abs" style="left:2.90px;top:240.20px;width:5.2px;height:5.2px;border-radius:50%;background:radial-gradient(circle at 45% 35%,#8af27a,#22c41c 55%,#109a10)"></div>
<div class="t" style="left:11.50px;top:237.62px;font-size:6.3px;color:#121212;letter-spacing:0.32px;transform:scaleX(0.87);width:53.56px;overflow:hidden;">LMOB-1753</div>
<div class="t" style="left:64.90px;top:237.62px;font-size:6.3px;color:#121212;letter-spacing:0.32px;transform:scaleX(0.85);width:155.65px;overflow:hidden;">SoundE - Formal Hospitality Party Invite</div>
<div class="t" style="left:203.70px;top:237.62px;font-size:6.3px;color:#121212;letter-spacing:0.32px;transform:scaleX(0.85);width:67.06px;overflow:hidden;">Collateral</div>
<div class="t" style="left:330.60px;top:237.62px;font-size:6.3px;color:#121212;letter-spacing:0.32px;transform:scaleX(0.85);width:68.24px;overflow:hidden;">@ Copy</div>
<div class="t" style="left:522.70px;top:237.62px;font-size:6.3px;color:#121212;letter-spacing:0.32px;transform:scaleX(0.975);width:28.41px;overflow:hidden;">07/11/16</div>
<div class="t" style="left:556.50px;top:237.62px;font-size:6.3px;color:#121212;letter-spacing:0.32px;transform:scaleX(0.975);width:29.23px;overflow:hidden;">07/11/16</div>
<div class="t" style="left:590.40px;top:237.62px;font-size:6.3px;color:#121212;letter-spacing:0.32px;transform:scaleX(0.975);width:27.38px;overflow:hidden;">09/12/16</div>
<div class="t" style="left:623.10px;top:237.62px;font-size:6.3px;color:#121212;letter-spacing:0.32px;transform:scaleX(0.85);width:87.88px;overflow:hidden;">Copywriting just finished today</div>
<div class="abs" style="left:0;top:257.40px;width:703.80px;height:1px;background:#ebebeb"></div>
<div class="abs" style="left:2.90px;top:250.60px;width:5.2px;height:5.2px;border-radius:50%;background:radial-gradient(circle at 45% 35%,#8af27a,#22c41c 55%,#109a10)"></div>
<div class="t" style="left:11.50px;top:248.02px;font-size:6.3px;color:#121212;letter-spacing:0.32px;transform:scaleX(0.87);width:53.56px;overflow:hidden;">LMOB-1818</div>
<div class="t" style="left:64.90px;top:248.02px;font-size:6.3px;color:#121212;letter-spacing:0.32px;transform:scaleX(0.85);width:155.65px;overflow:hidden;">NHL Promo - Ducks</div>
<div class="t" style="left:203.70px;top:248.02px;font-size:6.3px;color:#121212;letter-spacing:0.32px;transform:scaleX(0.85);width:67.06px;overflow:hidden;">Collateral</div>
<div class="t" style="left:330.60px;top:248.02px;font-size:6.3px;color:#121212;letter-spacing:0.32px;transform:scaleX(0.85);width:68.24px;overflow:hidden;">@ Internal Approval</div>
<div class="t" style="left:522.70px;top:248.02px;font-size:6.3px;color:#121212;letter-spacing:0.32px;transform:scaleX(0.975);width:28.41px;overflow:hidden;">07/16/16</div>
<div class="t" style="left:556.50px;top:248.02px;font-size:6.3px;color:#121212;letter-spacing:0.32px;transform:scaleX(0.975);width:29.23px;overflow:hidden;">07/15/16</div>
<div class="t" style="left:590.40px;top:248.02px;font-size:6.3px;color:#121212;letter-spacing:0.32px;transform:scaleX(0.975);width:27.38px;overflow:hidden;">09/05/16</div>
<div class="abs" style="left:0;top:267.80px;width:703.80px;height:1px;background:#ebebeb"></div>
<div class="abs" style="left:2.90px;top:261.00px;width:5.2px;height:5.2px;border-radius:50%;background:radial-gradient(circle at 45% 35%,#8af27a,#22c41c 55%,#109a10)"></div>
<div class="t" style="left:11.50px;top:258.42px;font-size:6.3px;color:#121212;letter-spacing:0.32px;transform:scaleX(0.87);width:53.56px;overflow:hidden;">LMOB-1836</div>
<div class="t" style="left:64.90px;top:258.42px;font-size:6.3px;color:#121212;letter-spacing:0.32px;transform:scaleX(0.85);width:155.65px;overflow:hidden;">Port/Railyard Brochure</div>
<div class="t" style="left:203.70px;top:258.42px;font-size:6.3px;color:#121212;letter-spacing:0.32px;transform:scaleX(0.85);width:67.06px;overflow:hidden;">Collateral</div>
<div class="t" style="left:330.60px;top:258.42px;font-size:6.3px;color:#121212;letter-spacing:0.32px;transform:scaleX(0.85);width:68.24px;overflow:hidden;">@ Internal Approval</div>
<div class="t" style="left:522.70px;top:258.42px;font-size:6.3px;color:#121212;letter-spacing:0.32px;transform:scaleX(0.975);width:28.41px;overflow:hidden;">07/07/16</div>
<div class="t" style="left:556.50px;top:258.42px;font-size:6.3px;color:#121212;letter-spacing:0.32px;transform:scaleX(0.975);width:29.23px;overflow:hidden;">07/18/16</div>
<div class="t" style="left:590.40px;top:258.42px;font-size:6.3px;color:#121212;letter-spacing:0.32px;transform:scaleX(0.975);width:27.38px;overflow:hidden;">10/21/16</div>
<div class="abs" style="left:0;top:278.20px;width:703.80px;height:1px;background:#ebebeb"></div>
<div class="abs" style="left:2.90px;top:271.40px;width:5.2px;height:5.2px;border-radius:50%;background:radial-gradient(circle at 45% 35%,#8af27a,#22c41c 55%,#109a10)"></div>
<div class="t" style="left:11.50px;top:268.82px;font-size:6.3px;color:#121212;letter-spacing:0.32px;transform:scaleX(0.87);width:53.56px;overflow:hidden;">LMOB-1837</div>
<div class="t" style="left:64.90px;top:268.82px;font-size:6.3px;color:#121212;letter-spacing:0.32px;transform:scaleX(0.85);width:155.65px;overflow:hidden;">Industrial Application Brochure</div>
<div class="t" style="left:203.70px;top:268.82px;font-size:6.3px;color:#121212;letter-spacing:0.32px;transform:scaleX(0.85);width:67.06px;overflow:hidden;">Collateral</div>
<div class="t" style="left:330.60px;top:268.82px;font-size:6.3px;color:#121212;letter-spacing:0.32px;transform:scaleX(0.85);width:68.24px;overflow:hidden;">@ Internal Approval</div>
<div class="t" style="left:522.70px;top:268.82px;font-size:6.3px;color:#121212;letter-spacing:0.32px;transform:scaleX(0.975);width:28.41px;overflow:hidden;">07/07/16</div>
<div class="t" style="left:556.50px;top:268.82px;font-size:6.3px;color:#121212;letter-spacing:0.32px;transform:scaleX(0.975);width:29.23px;overflow:hidden;">07/07/16</div>
<div class="t" style="left:590.40px;top:268.82px;font-size:6.3px;color:#121212;letter-spacing:0.32px;transform:scaleX(0.975);width:27.38px;overflow:hidden;">10/13/16</div>
<div class="abs" style="left:0;top:288.60px;width:703.80px;height:1px;background:#ebebeb"></div>
<div class="abs" style="left:2.90px;top:281.80px;width:5.2px;height:5.2px;border-radius:50%;background:radial-gradient(circle at 45% 35%,#8af27a,#22c41c 55%,#109a10)"></div>
<div class="t" style="left:11.50px;top:279.22px;font-size:6.3px;color:#121212;letter-spacing:0.32px;transform:scaleX(0.87);width:53.56px;overflow:hidden;">LMOB-1838</div>
<div class="t" style="left:64.90px;top:279.22px;font-size:6.3px;color:#121212;letter-spacing:0.32px;transform:scaleX(0.85);width:155.65px;overflow:hidden;">Rollin' to Alaska Event Flyer</div>
<div class="t" style="left:203.70px;top:279.22px;font-size:6.3px;color:#121212;letter-spacing:0.32px;transform:scaleX(0.85);width:67.06px;overflow:hidden;">Collateral</div>
<div class="t" style="left:330.60px;top:279.22px;font-size:6.3px;color:#121212;letter-spacing:0.32px;transform:scaleX(0.85);width:68.24px;overflow:hidden;">@ Internal Approval</div>
<div class="t" style="left:522.70px;top:279.22px;font-size:6.3px;color:#121212;letter-spacing:0.32px;transform:scaleX(0.975);width:28.41px;overflow:hidden;">06/19/16</div>
<div class="t" style="left:556.50px;top:279.22px;font-size:6.3px;color:#121212;letter-spacing:0.32px;transform:scaleX(0.975);width:29.23px;overflow:hidden;">06/27/16</div>
<div class="t" style="left:590.40px;top:279.22px;font-size:6.3px;color:#121212;letter-spacing:0.32px;transform:scaleX(0.975);width:27.38px;overflow:hidden;">08/08/16</div>
<div class="abs" style="left:0;top:299.00px;width:703.80px;height:1px;background:#ebebeb"></div>
<div class="abs" style="left:2.90px;top:292.20px;width:5.2px;height:5.2px;border-radius:50%;background:radial-gradient(circle at 45% 35%,#8af27a,#22c41c 55%,#109a10)"></div>
<div class="t" style="left:11.50px;top:289.62px;font-size:6.3px;color:#121212;letter-spacing:0.32px;transform:scaleX(0.87);width:53.56px;overflow:hidden;">LMOB-1797</div>
<div class="t" style="left:64.90px;top:289.62px;font-size:6.3px;color:#121212;letter-spacing:0.32px;transform:scaleX(0.85);width:155.65px;overflow:hidden;">GoFastXLR Poster</div>
<div class="t" style="left:203.70px;top:289.62px;font-size:6.3px;color:#121212;letter-spacing:0.32px;transform:scaleX(0.85);width:67.06px;overflow:hidden;">Collateral</div>
<div class="t" style="left:330.60px;top:289.62px;font-size:6.3px;color:#121212;letter-spacing:0.32px;transform:scaleX(0.85);width:68.24px;overflow:hidden;">@ AE Review/Client Proof</div>
<div class="t" style="left:522.70px;top:289.62px;font-size:6.3px;color:#121212;letter-spacing:0.32px;transform:scaleX(0.975);width:28.41px;overflow:hidden;">06/17/16</div>
<div class="t" style="left:556.50px;top:289.62px;font-size:6.3px;color:#121212;letter-spacing:0.32px;transform:scaleX(0.975);width:29.23px;overflow:hidden;">07/04/16</div>
<div class="t" style="left:590.40px;top:289.62px;font-size:6.3px;color:#121212;letter-spacing:0.32px;transform:scaleX(0.975);width:27.38px;overflow:hidden;">08/04/16</div>
<div class="abs" style="left:0;top:309.40px;width:703.80px;height:1px;background:#ebebeb"></div>
<div class="abs" style="left:2.90px;top:302.60px;width:5.2px;height:5.2px;border-radius:50%;background:radial-gradient(circle at 45% 35%,#8af27a,#22c41c 55%,#109a10)"></div>
<div class="t" style="left:11.50px;top:300.02px;font-size:6.3px;color:#121212;letter-spacing:0.32px;transform:scaleX(0.87);width:53.56px;overflow:hidden;">LMOB-1816</div>
<div class="t" style="left:64.90px;top:300.02px;font-size:6.3px;color:#121212;letter-spacing:0.32px;transform:scaleX(0.85);width:155.65px;overflow:hidden;">CMR Line Card</div>
<div class="t" style="left:203.70px;top:300.02px;font-size:6.3px;color:#121212;letter-spacing:0.32px;transform:scaleX(0.85);width:67.06px;overflow:hidden;">Collateral</div>
<div class="t" style="left:330.60px;top:300.02px;font-size:6.3px;color:#121212;letter-spacing:0.32px;transform:scaleX(0.85);width:68.24px;overflow:hidden;">@ Client Approved/Release</div>
<div class="t" style="left:522.70px;top:300.02px;font-size:6.3px;color:#121212;letter-spacing:0.32px;transform:scaleX(0.975);width:28.41px;overflow:hidden;">10/02/16</div>
<div class="t" style="left:556.50px;top:300.02px;font-size:6.3px;color:#121212;letter-spacing:0.32px;transform:scaleX(0.975);width:29.23px;overflow:hidden;">10/03/16</div>
<div class="t" style="left:590.40px;top:300.02px;font-size:6.3px;color:#121212;letter-spacing:0.32px;transform:scaleX(0.975);width:27.38px;overflow:hidden;">11/12/16</div>
<div class="abs" style="left:0;top:319.80px;width:703.80px;height:1px;background:#ebebeb"></div>
<div class="abs" style="left:2.90px;top:313.00px;width:5.2px;height:5.2px;border-radius:50%;background:radial-gradient(circle at 45% 35%,#8af27a,#22c41c 55%,#109a10)"></div>
<div class="t" style="left:11.50px;top:310.42px;font-size:6.3px;color:#121212;letter-spacing:0.32px;transform:scaleX(0.87);width:53.56px;overflow:hidden;">LMOB-1829</div>
<div class="t" style="left:64.90px;top:310.42px;font-size:6.3px;color:#121212;letter-spacing:0.32px;transform:scaleX(0.85);width:155.65px;overflow:hidden;">Portable Tradeshow Assets</div>
<div class="t" style="left:203.70px;top:310.42px;font-size:6.3px;color:#121212;letter-spacing:0.32px;transform:scaleX(0.85);width:67.06px;overflow:hidden;">Collateral</div>
<div class="t" style="left:330.60px;top:310.42px;font-size:6.3px;color:#121212;letter-spacing:0.32px;transform:scaleX(0.85);width:68.24px;overflow:hidden;">Pro Bono Work</div>
<div class="t" style="left:522.70px;top:310.42px;font-size:6.3px;color:#121212;letter-spacing:0.32px;transform:scaleX(0.975);width:28.41px;overflow:hidden;">06/15/16</div>
<div class="t" style="left:556.50px;top:310.42px;font-size:6.3px;color:#121212;letter-spacing:0.32px;transform:scaleX(0.975);width:29.23px;overflow:hidden;">06/20/16</div>
<div class="t" style="left:590.40px;top:310.42px;font-size:6.3px;color:#121212;letter-spacing:0.32px;transform:scaleX(0.975);width:27.38px;overflow:hidden;">08/22/16</div>
<div class="abs" style="left:0;top:330.20px;width:703.80px;height:1px;background:#ebebeb"></div>
<div class="abs" style="left:2.90px;top:323.40px;width:5.2px;height:5.2px;border-radius:50%;background:radial-gradient(circle at 45% 35%,#8af27a,#22c41c 55%,#109a10)"></div>
<div class="t" style="left:11.50px;top:320.82px;font-size:6.3px;color:#121212;letter-spacing:0.32px;transform:scaleX(0.87);width:53.56px;overflow:hidden;">LMOB-1844</div>
<div class="t" style="left:64.90px;top:320.82px;font-size:6.3px;color:#121212;letter-spacing:0.32px;transform:scaleX(0.85);width:155.65px;overflow:hidden;">Sports Sponsorship Re-license</div>
<div class="t" style="left:203.70px;top:320.82px;font-size:6.3px;color:#121212;letter-spacing:0.32px;transform:scaleX(0.85);width:67.06px;overflow:hidden;">Concept</div>
<div class="t" style="left:330.60px;top:320.82px;font-size:6.3px;color:#121212;letter-spacing:0.32px;transform:scaleX(0.85);width:68.24px;overflow:hidden;">@ ON HOLD Waiting for Client</div>
<div class="t" style="left:395.00px;top:320.82px;font-size:6.3px;color:#121212;letter-spacing:0.32px;transform:scaleX(0.85);width:67.41px;overflow:hidden;">Mobile</div>
<div class="t" style="left:458.30px;top:320.82px;font-size:6.3px;color:#121212;letter-spacing:0.32px;transform:scaleX(0.85);width:68.47px;overflow:hidden;">Dallas</div>
<div class="t" style="left:522.70px;top:320.82px;font-size:6.3px;color:#121212;letter-spacing:0.32px;transform:scaleX(0.975);width:28.41px;overflow:hidden;">07/22/16</div>
<div class="t" style="left:556.50px;top:320.82px;font-size:6.3px;color:#121212;letter-spacing:0.32px;transform:scaleX(0.975);width:29.23px;overflow:hidden;">07/25/16</div>
<div class="t" style="left:590.40px;top:320.82px;font-size:6.3px;color:#121212;letter-spacing:0.32px;transform:scaleX(0.975);width:27.38px;overflow:hidden;">09/01/16</div>
<div class="abs" style="left:0;top:340.60px;width:703.80px;height:1px;background:#ebebeb"></div>
<div class="abs" style="left:2.90px;top:333.80px;width:5.2px;height:5.2px;border-radius:50%;background:radial-gradient(circle at 45% 35%,#8af27a,#22c41c 55%,#109a10)"></div>
<div class="t" style="left:11.50px;top:331.22px;font-size:6.3px;color:#121212;letter-spacing:0.32px;transform:scaleX(0.87);width:53.56px;overflow:hidden;">SCU-906</div>
<div class="t" style="left:64.90px;top:331.22px;font-size:6.3px;color:#121212;letter-spacing:0.32px;transform:scaleX(0.85);width:155.65px;overflow:hidden;">Refinance Now Concept Development</div>
<div class="t" style="left:203.70px;top:331.22px;font-size:6.3px;color:#121212;letter-spacing:0.32px;transform:scaleX(0.85);width:67.06px;overflow:hidden;">Concept</div>
<div class="t" style="left:330.60px;top:331.22px;font-size:6.3px;color:#121212;letter-spacing:0.32px;transform:scaleX(0.85);width:68.24px;overflow:hidden;">@ ON HOLD Waiting for Client</div>
<div class="t" style="left:522.70px;top:331.22px;font-size:6.3px;color:#121212;letter-spacing:0.32px;transform:scaleX(0.975);width:28.41px;overflow:hidden;">07/15/16</div>
<div class="t" style="left:556.50px;top:331.22px;font-size:6.3px;color:#121212;letter-spacing:0.32px;transform:scaleX(0.975);width:29.23px;overflow:hidden;">07/15/16</div>
<div class="t" style="left:590.40px;top:331.22px;font-size:6.3px;color:#121212;letter-spacing:0.32px;transform:scaleX(0.975);width:27.38px;overflow:hidden;">08/05/16</div>
<div class="abs" style="left:0;top:351.00px;width:703.80px;height:1px;background:#ebebeb"></div>
<div class="abs" style="left:2.90px;top:344.20px;width:5.2px;height:5.2px;border-radius:50%;background:radial-gradient(circle at 45% 35%,#8af27a,#22c41c 55%,#109a10)"></div>
<div class="t" style="left:11.50px;top:341.62px;font-size:6.3px;color:#121212;letter-spacing:0.32px;transform:scaleX(0.87);width:53.56px;overflow:hidden;">DEL-1485</div>
<div class="t" style="left:64.90px;top:341.62px;font-size:6.3px;color:#121212;letter-spacing:0.32px;transform:scaleX(0.85);width:155.65px;overflow:hidden;">Freshly Caught Fish Coupon Mailer</div>
<div class="t" style="left:203.70px;top:341.62px;font-size:6.3px;color:#121212;letter-spacing:0.32px;transform:scaleX(0.85);width:67.06px;overflow:hidden;">Direct Mail</div>
<div class="t" style="left:330.60px;top:341.62px;font-size:6.3px;color:#121212;letter-spacing:0.32px;transform:scaleX(0.85);width:68.24px;overflow:hidden;">Being Estimated</div>
<div class="t" style="left:522.70px;top:341.62px;font-size:6.3px;color:#121212;letter-spacing:0.32px;transform:scaleX(0.975);width:28.41px;overflow:hidden;">07/10/16</div>
<div class="t" style="left:556.50px;top:341.62px;font-size:6.3px;color:#121212;letter-spacing:0.32px;transform:scaleX(0.975);width:29.23px;overflow:hidden;">07/13/16</div>
<div class="t" style="left:590.40px;top:341.62px;font-size:6.3px;color:#121212;letter-spacing:0.32px;transform:scaleX(0.975);width:27.38px;overflow:hidden;">09/23/16</div>
<div class="abs" style="left:0;top:361.40px;width:703.80px;height:1px;background:#ebebeb"></div>
<div class="abs" style="left:2.90px;top:354.60px;width:5.2px;height:5.2px;border-radius:50%;background:radial-gradient(circle at 45% 35%,#8af27a,#22c41c 55%,#109a10)"></div>
<div class="t" style="left:11.50px;top:352.02px;font-size:6.3px;color:#121212;letter-spacing:0.32px;transform:scaleX(0.87);width:53.56px;overflow:hidden;">AIR-1624</div>
<div class="t" style="left:64.90px;top:352.02px;font-size:6.3px;color:#121212;letter-spacing:0.32px;transform:scaleX(0.85);width:155.65px;overflow:hidden;">Promotion Q4 Landing Page</div>
<div class="t" style="left:203.70px;top:352.02px;font-size:6.3px;color:#121212;letter-spacing:0.32px;transform:scaleX(0.85);width:67.06px;overflow:hidden;">Direct Mail</div>
<div class="t" style="left:330.60px;top:352.02px;font-size:6.3px;color:#121212;letter-spacing:0.32px;transform:scaleX(0.85);width:68.24px;overflow:hidden;">Reopened : Need Go-Ahead</div>
<div class="t" style="left:522.70px;top:352.02px;font-size:6.3px;color:#121212;letter-spacing:0.32px;transform:scaleX(0.975);width:28.41px;overflow:hidden;">06/03/16</div>
<div class="t" style="left:556.50px;top:352.02px;font-size:6.3px;color:#121212;letter-spacing:0.32px;transform:scaleX(0.975);width:29.23px;overflow:hidden;">06/03/16</div>
<div class="t" style="left:590.40px;top:352.02px;font-size:6.3px;color:#121212;letter-spacing:0.32px;transform:scaleX(0.975);width:27.38px;overflow:hidden;">09/25/16</div>
<div class="abs" style="left:0;top:371.80px;width:703.80px;height:1px;background:#ebebeb"></div>
<div class="abs" style="left:2.90px;top:365.00px;width:5.2px;height:5.2px;border-radius:50%;background:radial-gradient(circle at 45% 35%,#8af27a,#22c41c 55%,#109a10)"></div>
<div class="t" style="left:11.50px;top:362.42px;font-size:6.3px;color:#121212;letter-spacing:0.32px;transform:scaleX(0.87);width:53.56px;overflow:hidden;">TOP-893</div>
<div class="t" style="left:64.90px;top:362.42px;font-size:6.3px;color:#121212;letter-spacing:0.32px;transform:scaleX(0.85);width:155.65px;overflow:hidden;">Splash Into Summer DM (Reprint)</div>
<div class="t" style="left:203.70px;top:362.42px;font-size:6.3px;color:#121212;letter-spacing:0.32px;transform:scaleX(0.85);width:67.06px;overflow:hidden;">Direct Mail</div>
<div class="t" style="left:330.60px;top:362.42px;font-size:6.3px;color:#121212;letter-spacing:0.32px;transform:scaleX(0.85);width:68.24px;overflow:hidden;">@ Ready To Roll</div>
<div class="t" style="left:522.70px;top:362.42px;font-size:6.3px;color:#121212;letter-spacing:0.32px;transform:scaleX(0.975);width:28.41px;overflow:hidden;">07/20/16</div>
<div class="t" style="left:556.50px;top:362.42px;font-size:6.3px;color:#121212;letter-spacing:0.32px;transform:scaleX(0.975);width:29.23px;overflow:hidden;">07/21/16</div>
<div class="t" style="left:590.40px;top:362.42px;font-size:6.3px;color:#121212;letter-spacing:0.32px;transform:scaleX(0.975);width:27.38px;overflow:hidden;">09/03/16</div>
<div class="abs" style="left:0;top:382.20px;width:703.80px;height:1px;background:#ebebeb"></div>
<div class="abs" style="left:2.90px;top:375.40px;width:5.2px;height:5.2px;border-radius:50%;background:radial-gradient(circle at 45% 35%,#8af27a,#22c41c 55%,#109a10)"></div>
<div class="t" style="left:11.50px;top:372.82px;font-size:6.3px;color:#121212;letter-spacing:0.32px;transform:scaleX(0.87);width:53.56px;overflow:hidden;">AIR-1554</div>
<div class="t" style="left:64.90px;top:372.82px;font-size:6.3px;color:#121212;letter-spacing:0.32px;transform:scaleX(0.85);width:155.65px;overflow:hidden;">Get it Done Enterprise App Offer</div>
<div class="t" style="left:203.70px;top:372.82px;font-size:6.3px;color:#121212;letter-spacing:0.32px;transform:scaleX(0.85);width:67.06px;overflow:hidden;">Direct Mail</div>
<div class="t" style="left:330.60px;top:372.82px;font-size:6.3px;color:#121212;letter-spacing:0.32px;transform:scaleX(0.85);width:68.24px;overflow:hidden;">@ Artwork/Illustration</div>
<div class="t" style="left:522.70px;top:372.82px;font-size:6.3px;color:#121212;letter-spacing:0.32px;transform:scaleX(0.975);width:28.41px;overflow:hidden;">06/20/16</div>
<div class="t" style="left:556.50px;top:372.82px;font-size:6.3px;color:#121212;letter-spacing:0.32px;transform:scaleX(0.975);width:29.23px;overflow:hidden;">06/20/16</div>
<div class="t" style="left:590.40px;top:372.82px;font-size:6.3px;color:#121212;letter-spacing:0.32px;transform:scaleX(0.975);width:27.38px;overflow:hidden;">10/03/16</div>
<div class="abs" style="left:0;top:392.60px;width:703.80px;height:1px;background:#ebebeb"></div>
<div class="abs" style="left:2.90px;top:385.80px;width:5.2px;height:5.2px;border-radius:50%;background:radial-gradient(circle at 45% 35%,#8af27a,#22c41c 55%,#109a10)"></div>
<div class="t" style="left:11.50px;top:383.22px;font-size:6.3px;color:#121212;letter-spacing:0.32px;transform:scaleX(0.87);width:53.56px;overflow:hidden;">AIRM-1056</div>
<div class="t" style="left:64.90px;top:383.22px;font-size:6.3px;color:#121212;letter-spacing:0.32px;transform:scaleX(0.85);width:155.65px;overflow:hidden;">San Diego DM</div>
<div class="t" style="left:203.70px;top:383.22px;font-size:6.3px;color:#121212;letter-spacing:0.32px;transform:scaleX(0.85);width:67.06px;overflow:hidden;">Direct Mail</div>
<div class="t" style="left:330.60px;top:383.22px;font-size:6.3px;color:#121212;letter-spacing:0.32px;transform:scaleX(0.85);width:68.24px;overflow:hidden;">@ Internal Approval</div>
<div class="t" style="left:522.70px;top:383.22px;font-size:6.3px;color:#121212;letter-spacing:0.32px;transform:scaleX(0.975);width:28.41px;overflow:hidden;">06/26/16</div>
<div class="t" style="left:556.50px;top:383.22px;font-size:6.3px;color:#121212;letter-spacing:0.32px;transform:scaleX(0.975);width:29.23px;overflow:hidden;">06/30/16</div>
<div class="t" style="left:590.40px;top:383.22px;font-size:6.3px;color:#121212;letter-spacing:0.32px;transform:scaleX(0.975);width:27.38px;overflow:hidden;">08/22/16</div>
<div class="abs" style="left:0;top:403.00px;width:703.80px;height:1px;background:#ebebeb"></div>
<div class="abs" style="left:2.90px;top:396.20px;width:5.2px;height:5.2px;border-radius:50%;background:radial-gradient(circle at 45% 35%,#8af27a,#22c41c 55%,#109a10)"></div>
<div class="t" style="left:11.50px;top:393.62px;font-size:6.3px;color:#121212;letter-spacing:0.32px;transform:scaleX(0.87);width:53.56px;overflow:hidden;">AIRM-1055</div>
<div class="t" style="left:64.90px;top:393.62px;font-size:6.3px;color:#121212;letter-spacing:0.32px;transform:scaleX(0.85);width:155.65px;overflow:hidden;">San Diego Movers Refresh</div>
<div class="t" style="left:203.70px;top:393.62px;font-size:6.3px;color:#121212;letter-spacing:0.32px;transform:scaleX(0.85);width:67.06px;overflow:hidden;">Direct Mail</div>
<div class="t" style="left:330.60px;top:393.62px;font-size:6.3px;color:#121212;letter-spacing:0.32px;transform:scaleX(0.85);width:68.24px;overflow:hidden;">@ Client Approved/Release</div>
<div class="t" style="left:522.70px;top:393.62px;font-size:6.3px;color:#121212;letter-spacing:0.32px;transform:scaleX(0.975);width:28.41px;overflow:hidden;">06/12/16</div>
<div class="t" style="left:556.50px;top:393.62px;font-size:6.3px;color:#121212;letter-spacing:0.32px;transform:scaleX(0.975);width:29.23px;overflow:hidden;">06/16/16</div>
<div class="t" style="left:590.40px;top:393.62px;font-size:6.3px;color:#121212;letter-spacing:0.32px;transform:scaleX(0.975);width:27.38px;overflow:hidden;">08/08/16</div>
<div class="abs" style="left:60.00px;top:81.30px;width:1px;height:324.30px;background:#dfdfdf"></div>
<div class="abs" style="left:199.10px;top:81.30px;width:1px;height:324.30px;background:#dfdfdf"></div>
<div class="abs" style="left:262.60px;top:81.30px;width:1px;height:324.30px;background:#dfdfdf"></div>
<div class="abs" style="left:326.10px;top:81.30px;width:1px;height:324.30px;background:#dfdfdf"></div>
<div class="abs" style="left:390.50px;top:81.30px;width:1px;height:324.30px;background:#dfdfdf"></div>
<div class="abs" style="left:454.20px;top:81.30px;width:1px;height:324.30px;background:#dfdfdf"></div>
<div class="abs" style="left:518.40px;top:81.30px;width:1px;height:324.30px;background:#dfdfdf"></div>
<div class="abs" style="left:552.30px;top:81.30px;width:1px;height:324.30px;background:#dfdfdf"></div>
<div class="abs" style="left:586.90px;top:81.30px;width:1px;height:324.30px;background:#dfdfdf"></div>
<div class="abs" style="left:619.00px;top:81.30px;width:1px;height:324.30px;background:#dfdfdf"></div>
<div class="abs" style="left:60.00px;top:164.80px;width:1px;height:10.40px;background:#d69e8e"></div>
<div class="abs" style="left:199.10px;top:164.80px;width:1px;height:10.40px;background:#d69e8e"></div>
<div class="abs" style="left:262.60px;top:164.80px;width:1px;height:10.40px;background:#d69e8e"></div>
<div class="abs" style="left:326.10px;top:164.80px;width:1px;height:10.40px;background:#d69e8e"></div>
<div class="abs" style="left:390.50px;top:164.80px;width:1px;height:10.40px;background:#d69e8e"></div>
<div class="abs" style="left:454.20px;top:164.80px;width:1px;height:10.40px;background:#d69e8e"></div>
<div class="abs" style="left:518.40px;top:164.80px;width:1px;height:10.40px;background:#d69e8e"></div>
<div class="abs" style="left:552.30px;top:164.80px;width:1px;height:10.40px;background:#d69e8e"></div>
<div class="abs" style="left:586.90px;top:164.80px;width:1px;height:10.40px;background:#d69e8e"></div>
<div class="abs" style="left:619.00px;top:164.80px;width:1px;height:10.40px;background:#d69e8e"></div>
<div class="abs" style="left:703.80px;top:82.00px;width:7.20px;height:323.60px;background:#f8f8f8;border-left:1px solid #eeeeee"></div>
<div class="abs" style="left:705.90px;top:82.40px;width:3.4px;height:8.6px;border-radius:1.7px;background:#b6b6b6"></div>
<div class="abs" style="left:0;top:405.20px;width:711px;height:10.80px;background:#e9e9e9;border-top:1px solid #d4d4d4;border-bottom:1px solid #f2f2f2"></div>
<div class="t" style="left:4.40px;top:405.72px;font-size:6.3px;color:#2a2a2a;letter-spacing:0.32px;transform:scaleX(0.85);">128 Job Tickets listed</div>
<svg style="left:705.20px;top:409.80px" width="5.8" height="5.8" viewBox="0 0 6 6"><path d="M6 0.8 L0.8 6 M6 2.8 L2.8 6 M6 4.8 L4.8 6" stroke="#8f8f8f" stroke-width=".6"/></svg>
</div></body></html>
